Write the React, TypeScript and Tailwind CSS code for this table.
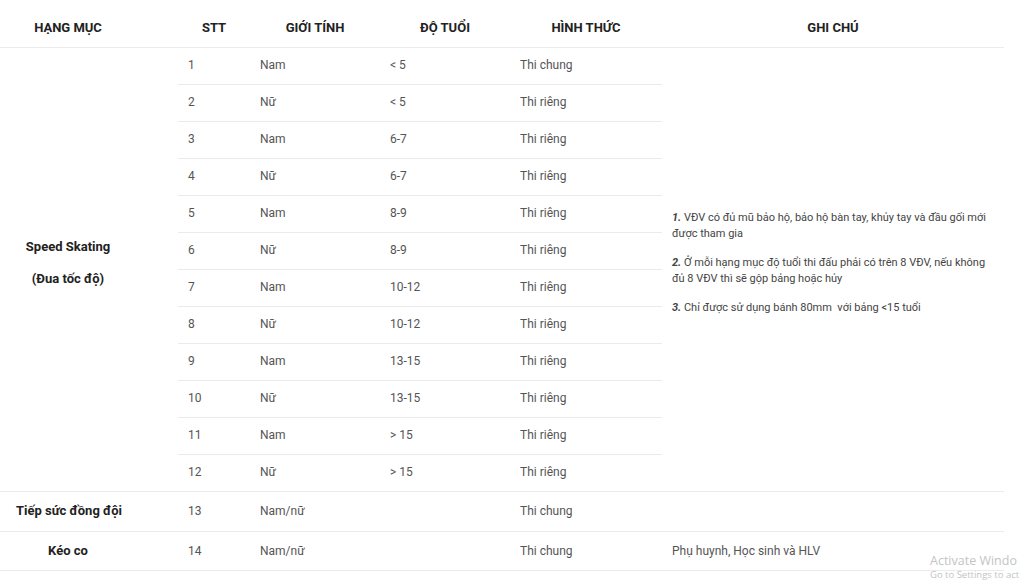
import React from "react";

const rows: [string, string, string, string][] = [
  ["1", "Nam", "< 5", "Thi chung"],
  ["2", "Nữ", "< 5", "Thi riêng"],
  ["3", "Nam", "6-7", "Thi riêng"],
  ["4", "Nữ", "6-7", "Thi riêng"],
  ["5", "Nam", "8-9", "Thi riêng"],
  ["6", "Nữ", "8-9", "Thi riêng"],
  ["7", "Nam", "10-12", "Thi riêng"],
  ["8", "Nữ", "10-12", "Thi riêng"],
  ["9", "Nam", "13-15", "Thi riêng"],
  ["10", "Nữ", "13-15", "Thi riêng"],
  ["11", "Nam", "> 15", "Thi riêng"],
  ["12", "Nữ", "> 15", "Thi riêng"],
];

const td = "px-[10px] align-middle text-left";

export default function App() {
  return (
    <div
      className="relative w-[1024px] h-[581px] overflow-hidden bg-white text-[#555]"
      style={{ fontFamily: "Roboto, 'Noto Sans', Arial, sans-serif" }}
    >
      <table className="w-[1004px] table-fixed border-collapse text-[12px]">
        <colgroup>
          <col className="w-[178px]" />
          <col className="w-[72px]" />
          <col className="w-[130px]" />
          <col className="w-[130px]" />
          <col className="w-[152px]" />
          <col className="w-[342px]" />
        </colgroup>
        <thead>
          <tr className="h-[47px] border-b border-[#ebebeb] text-[13px] font-bold text-[#222]">
            <th className="pr-[42px] pt-[8px] text-center align-middle">HẠNG MỤC</th>
            <th className="pt-[8px] text-center align-middle">STT</th>
            <th className="pt-[8px] text-center align-middle">GIỚI TÍNH</th>
            <th className="pt-[8px] text-center align-middle">ĐỘ TUỔI</th>
            <th className="pt-[8px] text-center align-middle">HÌNH THỨC</th>
            <th className="pt-[8px] text-center align-middle">GHI CHÚ</th>
          </tr>
        </thead>
        <tbody>
          {rows.map((r, i) => (
            <tr
              key={r[0]}
              className={`h-[37px] ${i === rows.length - 1 ? "border-b border-[#ebebeb]" : ""}`}
            >
              {i === 0 && (
                <td rowSpan={12} className="pr-[42px] text-center align-middle text-[13px] font-bold text-[#222]">
                  <p className="mb-[13px] leading-[19px]">Speed Skating</p>
                  <p className="mb-[13px] leading-[19px]">(Đua tốc độ)</p>
                </td>
              )}
              <td className={`${td} pb-[1px] ${i < rows.length - 1 ? "border-b border-[#ebebeb]" : ""}`}>{r[0]}</td>
              <td className={`${td} pb-[1px] ${i < rows.length - 1 ? "border-b border-[#ebebeb]" : ""}`}>{r[1]}</td>
              <td className={`${td} pb-[1px] ${i < rows.length - 1 ? "border-b border-[#ebebeb]" : ""}`}>{r[2]}</td>
              <td className={`${td} pb-[1px] ${i < rows.length - 1 ? "border-b border-[#ebebeb]" : ""}`}>{r[3]}</td>
              {i === 0 && (
                <td rowSpan={12} className="px-[10px] align-middle text-[11px] leading-[16px] text-[#444]">
                  <p className="mb-[13px] whitespace-nowrap">
                    <b><i>1.</i></b> VĐV có đủ mũ bảo hộ, bảo hộ bàn tay, khủy tay và đầu gối mới
                    <br />
                    được tham gia
                  </p>
                  <p className="mb-[13px] whitespace-nowrap">
                    <b><i>2.</i></b> Ở mỗi hạng mục độ tuổi thi đấu phải có trên 8 VĐV, nếu không
                    <br />
                    đủ 8 VĐV thì sẽ gộp bảng hoặc hủy
                  </p>
                  <p className="mb-[13px] whitespace-nowrap">
                    <b><i>3.</i></b> Chỉ được sử dụng bánh 80mm&nbsp; với bảng &lt;15 tuổi
                  </p>
                </td>
              )}
            </tr>
          ))}
          <tr className="h-[40px] border-b border-[#ebebeb]">
            <td className="pr-[42px] pl-[2px] text-center align-middle text-[13px] font-bold text-[#222]">Tiếp sức đồng đội</td>
            <td className={td}>13</td>
            <td className={td}>Nam/nữ</td>
            <td className={td}></td>
            <td className={td}>Thi chung</td>
            <td className={td}></td>
          </tr>
          <tr className="h-[39px] border-b border-[#ebebeb]">
            <td className="pr-[42px] text-center align-middle text-[13px] font-bold text-[#222]">Kéo co</td>
            <td className={td}>14</td>
            <td className={td}>Nam/nữ</td>
            <td className={td}></td>
            <td className={td}>Thi chung</td>
            <td className={td}>Phụ huynh, Học sinh và HLV</td>
          </tr>
        </tbody>
      </table>

      <div
        className="pointer-events-none absolute left-[930px] top-[553px] whitespace-nowrap text-[#c4c4c4]"
        style={{ fontFamily: "'Open Sans', 'Noto Sans', sans-serif" }}
      >
        <div className="text-[12.5px] leading-[16px]">Activate Windo</div>
        <div className="text-[9.5px] leading-[12px]">Go to Settings to act</div>
      </div>
    </div>
  );
}
